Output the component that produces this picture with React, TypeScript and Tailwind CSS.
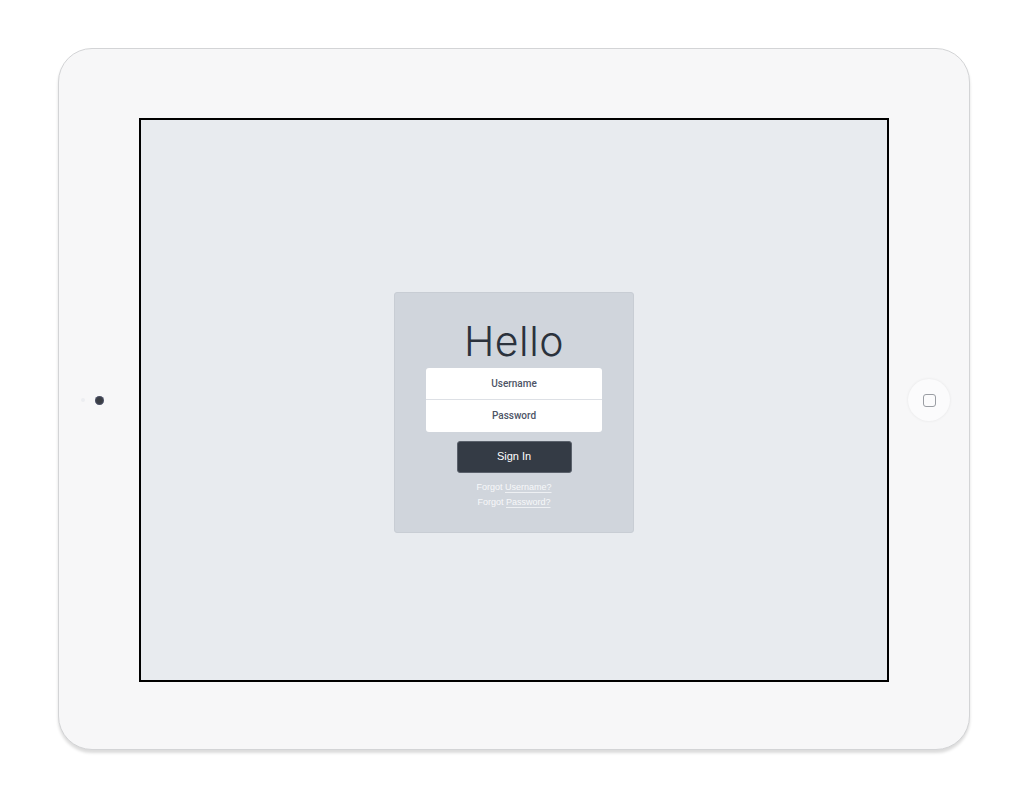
export default function App() {
  return (
    <div className="min-h-[800px] w-[1025px] bg-white pl-[58px] pt-[48px]">
      {/* Device body */}
      <div className="flex h-[702px] w-[912px] rounded-[34px] border border-[#d3d4d6] bg-[#f7f7f8] pt-[69px] pb-[67px] shadow-[0_3px_3px_rgba(0,0,0,0.14)]">
        {/* Camera side */}
        <div className="relative flex w-[80px] shrink-0 items-center justify-center">
          <span className="absolute left-[22px] top-[280px] h-[4px] w-[4px] rounded-full bg-[#eceef1]" />
          <span className="h-[9px] w-[9px] rounded-full bg-[#3a3d44] shadow-[inset_0_0_2px_rgba(120,130,180,0.8)]" />
        </div>

        {/* Screen */}
        <div className="flex h-[564px] w-[750px] shrink-0 items-center justify-center border-2 border-black bg-[#e8ebef]">
          <div className="mt-[24px] flex h-[241px] w-[240px] flex-col items-center rounded-[3px] border border-[#c8cdd4] bg-[#d0d5dc] pt-[24px] font-['Liberation_Sans',Arial,sans-serif]">
            <h1 className="font-['Inter',sans-serif] text-[41px] leading-[48px] font-light tracking-[0.5px] text-[#2b323c]">
              Hello
            </h1>
            <div className="mt-[3px] flex w-[176px] flex-col rounded-[3px] bg-white font-['Roboto',sans-serif]">
              <div className="flex h-[32px] items-center justify-center border-b border-[#dde0e5] text-[10px] font-medium text-[#4d5466]">
                Username
              </div>
              <div className="flex h-[32px] items-center justify-center text-[10px] font-medium text-[#4d5466]">
                Password
              </div>
            </div>
            <button className="mt-[9px] flex h-[32px] w-[115px] items-center justify-center rounded-[3px] border border-[#5a616b] bg-[#343b45] text-[11px] text-white">
              Sign In
            </button>
            <div className="mt-[7px] text-[9px] leading-[15px] text-[#f7f8fa]">
              Forgot <span className="underline decoration-[#eef0f3] underline-offset-2">Username?</span>
            </div>
            <div className="text-[9px] leading-[15px] text-[#f7f8fa]">
              Forgot <span className="underline decoration-[#eef0f3] underline-offset-2">Password?</span>
            </div>
          </div>
        </div>

        {/* Home button side */}
        <div className="flex w-[80px] shrink-0 items-center justify-center">
          <div className="flex h-[42px] w-[42px] items-center justify-center rounded-full bg-[#fbfbfc] shadow-[0_0_3px_rgba(0,0,0,0.08)]">
            <span className="h-[13px] w-[13px] rounded-[3px] border border-[#9a9da3]" />
          </div>
        </div>
      </div>
    </div>
  );
}
